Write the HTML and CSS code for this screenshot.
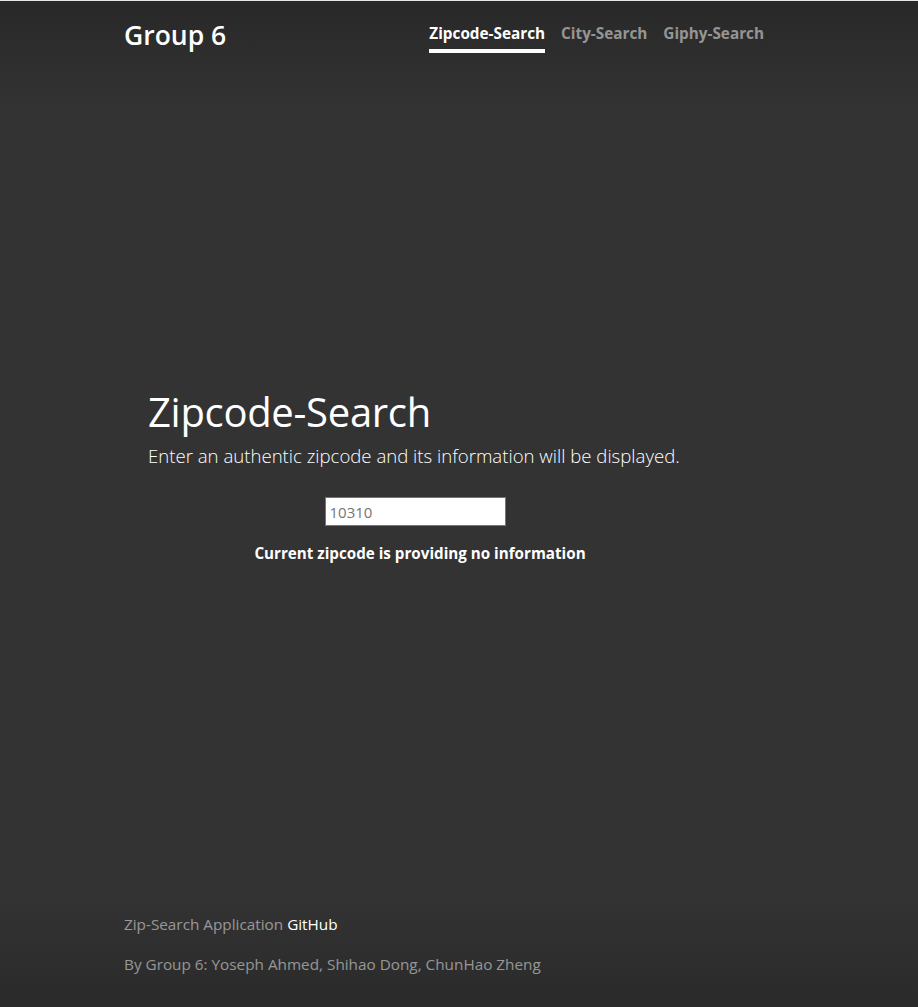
FILE: index.html
```html
<!DOCTYPE html>
<html lang="en">
<head>
<meta charset="utf-8">
<title>Zipcode-Search</title>
<link rel="stylesheet" href="styles.css">
</head>
<body>
<div class="cover">
  <header class="masthead">
    <h3 class="brand">Group 6</h3>
    <nav class="nav">
      <a class="nav-link active" href="#">Zipcode-Search</a>
      <a class="nav-link" href="#">City-Search</a>
      <a class="nav-link" href="#">Giphy-Search</a>
    </nav>
  </header>
  <main class="main">
    <h1 class="title">Zipcode-Search</h1>
    <p class="lead">Enter an authentic zipcode and its information will be displayed.</p>
    <div class="search">
      <input class="zip-input" type="text" placeholder="10310">
      <p class="message">Current zipcode is providing no information</p>
    </div>
  </main>
  <footer class="footer">
    <p>Zip-Search Application <a href="#">GitHub</a></p>
    <p>By Group 6: Yoseph Ahmed, Shihao Dong, ChunHao Zheng</p>
  </footer>
</div>
</body>
</html>
```
FILE: styles.css
```css
html, body {
  height: 100%;
}
body {
  margin: 0;
  background: linear-gradient(to bottom, #282828 0, #333 110px, #333 calc(100% - 110px), #2a2a2a 100%);
  color: #fff;
  font-family: "Open Sans", "Noto Sans", sans-serif;
  border-top: 1px solid #e6e6e6;
  box-sizing: border-box;
}
.cover {
  display: flex;
  flex-direction: column;
  height: 100%;
  max-width: 672px;
  margin: 0 auto;
  padding-left: 1px;
  box-sizing: border-box;
}
.masthead {
  display: flex;
  justify-content: space-between;
  align-items: flex-start;
  padding-top: 16px;
  padding-right: 31px;
}
.brand {
  margin: 0;
  font-size: 26.5px;
  font-weight: 600;
  line-height: 36px;
}
.nav {
  display: flex;
  gap: 16px;
  padding-top: 5px;
}
.nav-link {
  color: rgba(255, 255, 255, .5);
  font-weight: 700;
  font-size: 15.3px;
  text-decoration: none;
  line-height: 22px;
  padding: 0 0 5px;
  border-bottom: 4px solid transparent;
}
.nav-link.active {
  color: #fff;
  border-bottom-color: #fff;
}
.main {
  margin: auto 0;
  padding: 0 0 12px 24px;
  width: 544px;
}
.title {
  margin: 0 0 6px;
  font-size: 40px;
  font-weight: 500;
  line-height: 48px;
  letter-spacing: -0.3px;
}
.lead {
  margin: 0;
  font-size: 18.6px;
  font-weight: 300;
  line-height: 28px;
}
.search {
  display: flex;
  flex-direction: column;
  align-items: center;
  padding-top: 27px;
}
.zip-input {
  width: 181px;
  height: 29px;
  box-sizing: border-box;
  border: 1px solid #767676;
  padding: 2px 4px;
  font: inherit;
  font-size: 15px;
  margin-left: -10px;
}
.zip-input::placeholder {
  color: #757575;
}
.message {
  margin: 15px 0 0;
  font-weight: 700;
  font-size: 15.2px;
  line-height: 24px;
}
.footer {
  color: rgba(255, 255, 255, .5);
  font-size: 15.3px;
  padding-bottom: 15px;
}
.footer p {
  margin: 0 0 16px;
  line-height: 24px;
}
.footer a {
  color: #fff;
  text-decoration: none;
}
```
